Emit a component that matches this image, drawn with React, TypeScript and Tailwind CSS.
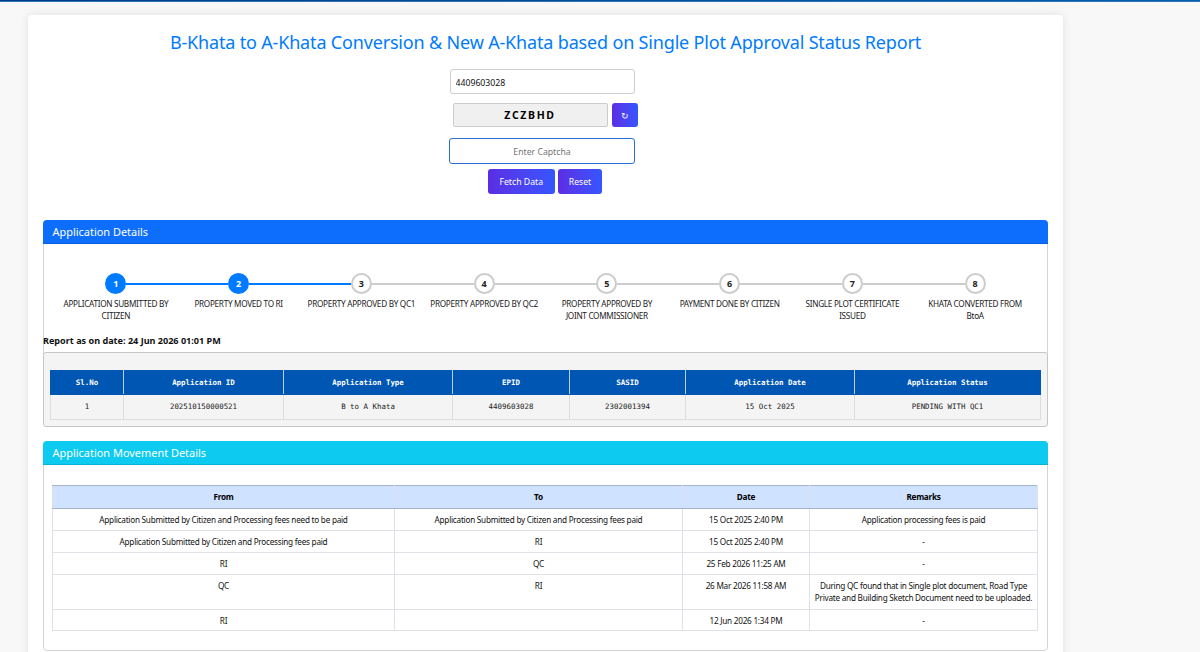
import React from 'react';

const steps = [
  { label: ['APPLICATION SUBMITTED BY', 'CITIZEN'], done: true },
  { label: ['PROPERTY MOVED TO RI'], done: true },
  { label: ['PROPERTY APPROVED BY QC1'], done: false },
  { label: ['PROPERTY APPROVED BY QC2'], done: false },
  { label: ['PROPERTY APPROVED BY', 'JOINT COMMISSIONER'], done: false },
  { label: ['PAYMENT DONE BY CITIZEN'], done: false },
  { label: ['SINGLE PLOT CERTIFICATE', 'ISSUED'], done: false },
  { label: ['KHATA CONVERTED FROM', 'BtoA'], done: false },
];

const details = [
  ['Sl.No', '1'],
  ['Application ID', '202510150000521'],
  ['Application Type', 'B to A Khata'],
  ['EPID', '4409603028'],
  ['SASID', '2302001394'],
  ['Application Date', '15 Oct 2025'],
  ['Application Status', 'PENDING WITH QC1'],
];

const movements = [
  {
    cells: [
      'Application Submitted by Citizen and Processing fees need to be paid',
      'Application Submitted by Citizen and Processing fees paid',
      '15 Oct 2025 2:40 PM',
      'Application processing fees is paid',
    ],
    height: 'h-[22px]',
  },
  {
    cells: ['Application Submitted by Citizen and Processing fees paid', 'RI', '15 Oct 2025 2:40 PM', '-'],
    height: 'h-[22px]',
  },
  { cells: ['RI', 'QC', '25 Feb 2026 11:25 AM', '-'], height: 'h-[22px]' },
  {
    cells: [
      'QC',
      'RI',
      '26 Mar 2026 11:58 AM',
      'During QC found that in Single plot document, Road Type\nPrivate and Building Sketch Document need to be uploaded.',
    ],
    height: 'h-[35px]',
  },
  { cells: ['RI', '', '12 Jun 2026 1:34 PM', '-'], height: 'h-[21px]' },
];

const gradientButton =
  'flex items-center justify-center rounded-[3px] bg-linear-to-r from-[#5a2de4] to-[#3355ff] text-white';

function SearchForm() {
  return (
    <form className="mt-[14px] flex flex-col items-center text-[8.7px]" onSubmit={(e) => e.preventDefault()}>
      <input
        defaultValue="4409603028"
        className="mr-[6px] h-[25px] w-[185px] rounded-[3px] border border-[#ccc] bg-white px-[4.5px] pt-[2px] text-[#111] outline-none"
      />
      <div className="mt-[9px] mr-px flex gap-[4px]">
        <div className="flex h-[24px] w-[155px] items-center justify-center rounded-[2px] border border-[#ccc] bg-[#f0f0f0] pt-px text-[10.5px] font-bold tracking-[1.65px] text-black">
          ZCZBHD
        </div>
        <button type="button" className={`${gradientButton} h-[24px] w-[26px] pt-px text-[9px]`}>
          ↻
        </button>
      </div>
      <input
        placeholder="Enter Captcha"
        className="mt-[11px] mr-[7px] h-[26px] w-[186px] rounded-[3px] border border-[#2a6fd6] bg-white pt-px text-center outline-none placeholder:text-[#757575]"
      />
      <div className="mt-[5px] mr-px flex gap-[3px]">
        <button type="button" className={`${gradientButton} h-[25px] w-[67px] pt-[2px]`}>
          Fetch Data
        </button>
        <button type="button" className={`${gradientButton} h-[25px] w-[44.5px] pt-[2px]`}>
          Reset
        </button>
      </div>
    </form>
  );
}

function Stepper() {
  return (
    <ol className="mt-[29px] ml-[10.5px] flex w-[982px] text-center">
      {steps.map((step, i) => (
        <li key={step.label[0]} className="flex flex-1 flex-col items-center">
          <div className="flex w-full items-center">
            <span
              className={`h-[2px] flex-1 ${i === 0 ? 'bg-transparent' : i <= 2 ? 'bg-[#007bff]' : 'bg-[#ccc]'}`}
            />
            <span
              className={`flex size-[21px] items-center justify-center rounded-full border-2 text-[9px] leading-none font-bold ${
                step.done ? 'border-[#007bff] bg-[#007bff] text-white' : 'border-[#ccc] bg-white text-[#222]'
              }`}
            >
              {i + 1}
            </span>
            <span
              className={`h-[2px] flex-1 ${i === 7 ? 'bg-transparent' : i < 2 ? 'bg-[#007bff]' : 'bg-[#ccc]'}`}
            />
          </div>
          <div className="mt-[4px] text-[8.2px] leading-[12px] tracking-[-0.3px] whitespace-nowrap text-[#222]">
            {step.label.map((line) => (
              <div key={line}>{line}</div>
            ))}
          </div>
        </li>
      ))}
    </ol>
  );
}

function DetailsTable() {
  return (
    <div className="-mx-px h-[75px] rounded-[3px] border border-[#c6c6c6] bg-[#f4f4f4] px-[6px] pt-[17px]">
      <table className="w-[991px] table-fixed border-collapse text-center font-['DejaVu_Sans_Mono',monospace] text-[7.45px] leading-none">
        <colgroup>
          <col className="w-[73px]" />
          <col className="w-[160px]" />
          <col className="w-[169px]" />
          <col className="w-[117px]" />
          <col className="w-[116px]" />
          <col className="w-[169px]" />
          <col />
        </colgroup>
        <thead>
          <tr className="h-[24px] bg-[#0056b3] text-white">
            {details.map(([name]) => (
              <th
                key={name}
                className="border border-x-[#bcd] border-y-[#0056b3] p-0 font-bold first:border-l-[#0056b3] last:border-r-[#0056b3]"
              >
                {name}
              </th>
            ))}
          </tr>
        </thead>
        <tbody>
          <tr className="h-[25px] text-[#222]">
            {details.map(([name, value]) => (
              <td key={name} className="border border-[#ddd] p-0">
                {value}
              </td>
            ))}
          </tr>
        </tbody>
      </table>
    </div>
  );
}

function MovementTable() {
  return (
    <table className="mt-[20px] ml-[8px] w-[986px] table-fixed border-collapse text-center text-[8.2px] leading-[12px] tracking-[-0.25px] text-[#111]">
      <colgroup>
        <col className="w-[342px]" />
        <col className="w-[288px]" />
        <col className="w-[127px]" />
        <col />
      </colgroup>
      <thead>
        <tr className="h-[23px] bg-[#cfe2ff]">
          {['From', 'To', 'Date', 'Remarks'].map((name) => (
            <th key={name} className="border border-x-[#dee2e6] border-y-[#a6b5cc] p-0 font-bold text-black">
              {name}
            </th>
          ))}
        </tr>
      </thead>
      <tbody>
        {movements.map((row, i) => (
          <tr key={i} className={row.height}>
            {row.cells.map((cell, j) => (
              <td
                key={j}
                className="border border-x-[#dee2e6] border-b-[#dee2e6] p-0 pt-[5px] align-top whitespace-pre"
              >
                {cell}
              </td>
            ))}
          </tr>
        ))}
      </tbody>
    </table>
  );
}

export default function App() {
  return (
    <div className="h-[652px] overflow-hidden bg-[#f8f8f8] font-['Noto_Sans',sans-serif]">
      <div className="h-[2px] border-b border-[#2f73b5] bg-linear-to-r from-[#003a8c] to-[#0062ad]" />
      <main className="mt-[13px] ml-[28px] h-[700px] w-[1035px] rounded-[4px] bg-white px-[15px] pt-[15px] shadow-[0_0_10px_rgba(0,0,0,0.1)]">
        <h1 className="text-center text-[18px] leading-[25px] tracking-[-0.17px] text-[#007bff]">
          B-Khata to A-Khata Conversion &amp; New A-Khata based on Single Plot Approval Status Report
        </h1>
        <SearchForm />
        <section className="mt-[26px] h-[206px] rounded-[4px] border border-[#d5d5d5]">
          <h2 className="-mx-px -mt-px h-[24px] rounded-t-[4px] border-b border-[#0c5fdd] bg-[#0d6efd] pl-[9.5px] text-[10.95px] leading-[24px] text-white">
            Application Details
          </h2>
          <Stepper />
          <p className="mt-[12px] -ml-px mb-[5px] text-[9.08px] leading-[13px] font-bold text-[#111]">
            Report as on date: 24 Jun 2026 01:01 PM
          </p>
          <DetailsTable />
        </section>
        <section className="mt-[15px] h-[210px] rounded-[4px] border border-[#d5d5d5]">
          <h2 className="-mx-px -mt-px h-[24px] rounded-t-[4px] border-b border-[#0cb0d4] bg-[#0dcaf0] pl-[9.5px] text-[10.95px] leading-[24px] text-white">
            Application Movement Details
          </h2>
          <MovementTable />
        </section>
      </main>
    </div>
  );
}
